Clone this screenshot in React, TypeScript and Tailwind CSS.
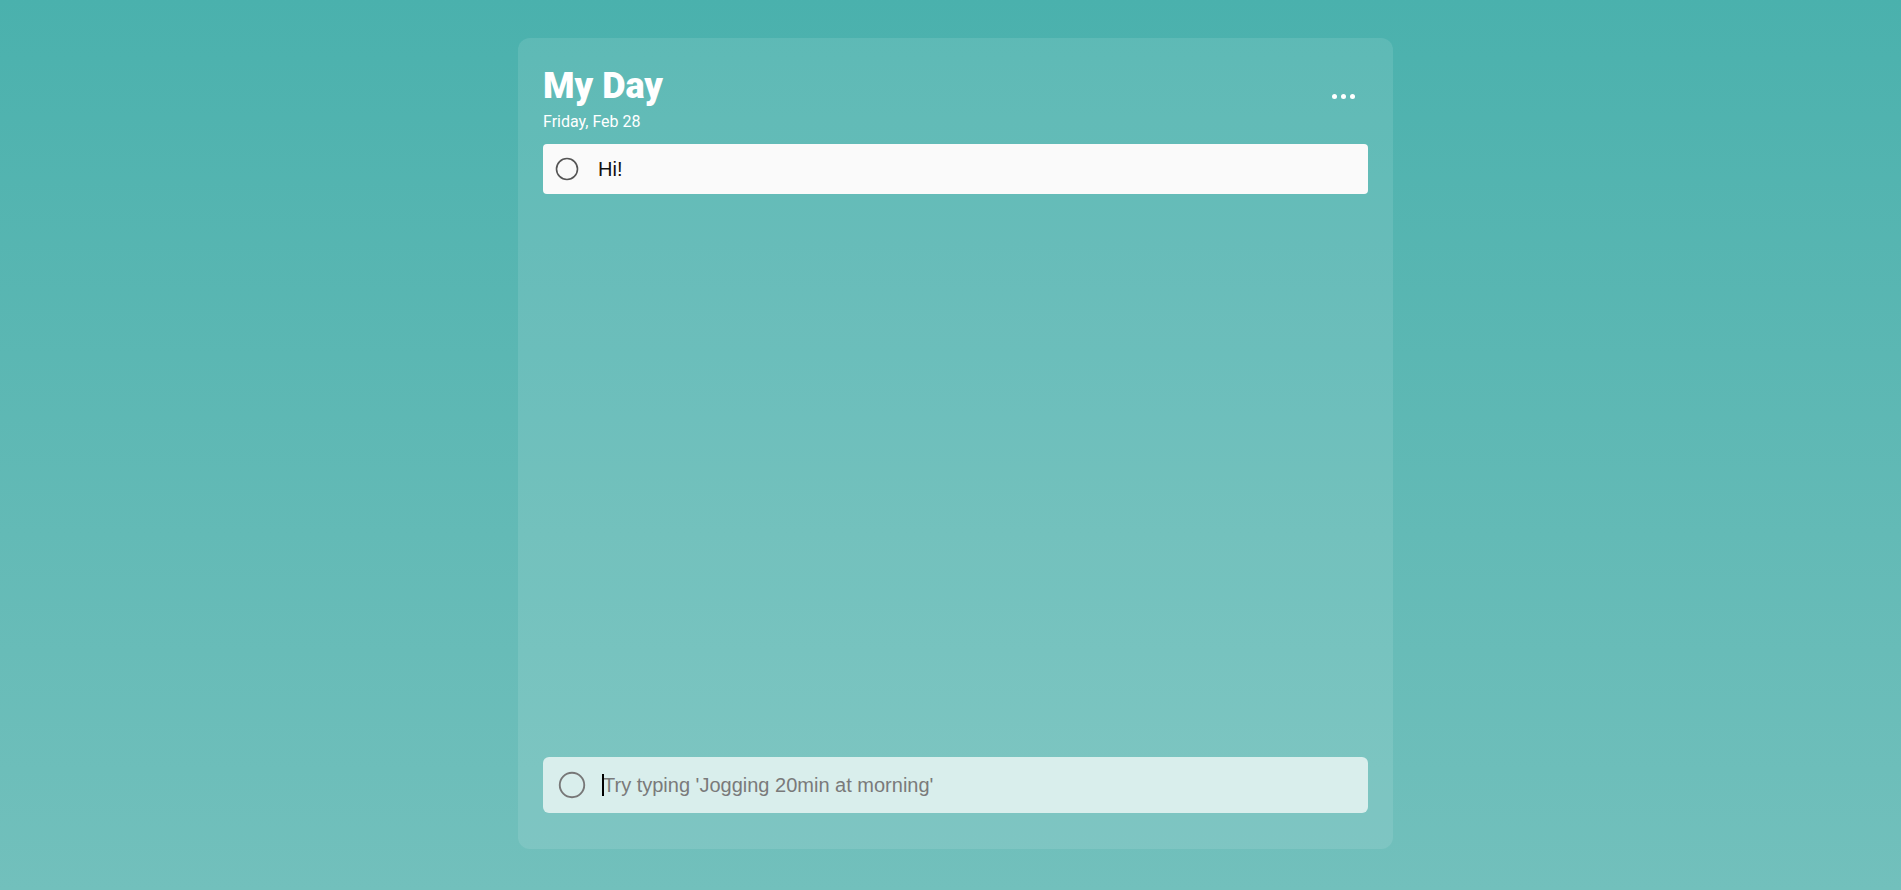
import { useState } from "react"

type Task = { id: number; title: string; done: boolean }

function Circle({ size, color }: { size: number; color: string }) {
  return (
    <svg width={size} height={size} viewBox="0 0 24 24" className="shrink-0">
      <circle cx="12" cy="12" r="10.5" fill="none" stroke={color} strokeWidth="1.6" />
    </svg>
  )
}

export default function App() {
  const [tasks] = useState<Task[]>([{ id: 1, title: "Hi!", done: false }])
  const [draft, setDraft] = useState("")

  return (
    <div className="min-h-screen w-full bg-gradient-to-b from-[#4ab1ad] to-[#72c0bc] flex justify-center pl-[10px] pt-[38px] pb-[41px] font-['Roboto',sans-serif]">
      <div className="w-[875px] h-[811px] rounded-[12px] bg-white/10 flex flex-col px-[25px] pb-[36px]">
        <div className="flex items-start justify-between pt-[27px]">
          <div>
            <h1 className="text-[36px] leading-[42px] font-black text-white">My Day</h1>
            <p className="mt-[5px] text-[16px] leading-[19px] text-white">Friday, Feb 28</p>
          </div>
          <button type="button" className="mt-[27px] mr-[11px] flex gap-[4px] p-[2px]">
            <span className="w-[5px] h-[5px] rounded-full bg-white" />
            <span className="w-[5px] h-[5px] rounded-full bg-white" />
            <span className="w-[5px] h-[5px] rounded-full bg-white" />
          </button>
        </div>

        <ul className="flex-1 mt-[13px] flex flex-col gap-2">
          {tasks.map((t) => (
            <li
              key={t.id}
              className="h-[50px] rounded-[4px] bg-[#fafafa] flex items-center pl-[12px] gap-[19px]"
            >
              <Circle size={24} color="#555555" />
              <span className="text-[20px] text-[#111] font-['Liberation_Sans',Arial,sans-serif]">{t.title}</span>
            </li>
          ))}
        </ul>

        <div className="h-[56px] rounded-[6px] bg-[#d9eeec] flex items-center pl-[15px] gap-[16px]">
          <Circle size={28} color="#777777" />
          <div className="relative flex-1 flex items-center">
            {draft === "" && (
              <span className="absolute left-[0px] top-1/2 -translate-y-1/2 w-[2px] h-[22px] bg-black" />
            )}
            <input
              value={draft}
              onChange={(e) => setDraft(e.target.value)}
              placeholder="Try typing 'Jogging 20min at morning'"
              className="w-full pl-[1px] bg-transparent outline-none text-[20px] text-[#222] placeholder:text-[#7a7a7a] font-['Liberation_Sans',Arial,sans-serif] caret-black"
            />
          </div>
        </div>
      </div>
    </div>
  )
}
